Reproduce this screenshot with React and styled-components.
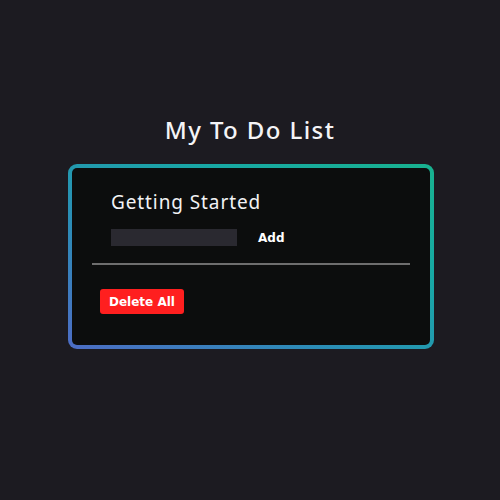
import React, { useState } from 'react';
import styled, { createGlobalStyle } from 'styled-components';

const GlobalStyle = createGlobalStyle`
  html, body {
    margin: 0;
    padding: 0;
    background: #1c1b21;
  }
  body {
    font-family: "Noto Sans", "DejaVu Sans", sans-serif;
  }
`

const Page = styled.div`
  min-height: 500px;
  display: flex;
  flex-direction: column;
  align-items: center;
  padding-top: 112px;
  box-sizing: border-box;
`

const Title = styled.h1`
  margin: 0 0 16px 0;
  font-family: "Noto Sans", sans-serif;
  font-weight: 500;
  font-size: 24px;
  line-height: 36px;
  color: #f4f4f6;
  letter-spacing: 1.4px;
`

const Card = styled.div`
  width: 366px;
  height: 185px;
  box-sizing: border-box;
  border: 4px solid transparent;
  border-radius: 9px;
  background:
    linear-gradient(#0c0d0d, #0c0d0d) padding-box,
    linear-gradient(to top right, #4d6cc4, #2b8db6 35%, #17a9a4 70%, #18b28f) border-box;
  margin-left: 2px;
  padding: 20px 20px 0 20px;
`

const Heading = styled.h2`
  margin: 0 0 13px 19px;
  font-family: "Noto Sans", sans-serif;
  font-weight: 400;
  font-size: 19px;
  line-height: 28px;
  color: #f2f2f4;
  letter-spacing: 0.9px;
`

const InputRow = styled.div`
  display: flex;
  align-items: center;
  gap: 21px;
  margin-left: 19px;
`

const TaskInput = styled.input`
  width: 126px;
  height: 17px;
  box-sizing: border-box;
  border: none;
  outline: none;
  background: #2a2930;
  color: #fff;
  padding: 0 4px;
`

const AddButton = styled.button`
  border: none;
  background: none;
  color: #ffffff;
  font-family: "DejaVu Sans", sans-serif;
  font-weight: bold;
  font-size: 12px;
  padding: 0;
  cursor: pointer;
`

const Divider = styled.hr`
  margin: 17px 0 0 0;
  border: none;
  height: 2px;
  background: #6e6e6e;
`

const DeleteButton = styled.button`
  margin: 24px 0 0 8px;
  height: 25px;
  padding: 0 9px;
  border: none;
  border-radius: 3px;
  background: #ff1f1f;
  color: #fff;
  font-family: "DejaVu Sans", sans-serif;
  font-weight: bold;
  font-size: 12px;
  cursor: pointer;
`

export default function App() {
  const [task, setTask] = useState('')

  return (
    <>
      <GlobalStyle />
      <Page>
        <Title>My To Do List</Title>
        <Card>
          <Heading>Getting Started</Heading>
          <InputRow>
            <TaskInput value={task} onChange={(e) => setTask(e.target.value)} />
            <AddButton>Add</AddButton>
          </InputRow>
          <Divider />
          <DeleteButton onClick={() => setTask('')}>Delete All</DeleteButton>
        </Card>
      </Page>
    </>
  )
}
